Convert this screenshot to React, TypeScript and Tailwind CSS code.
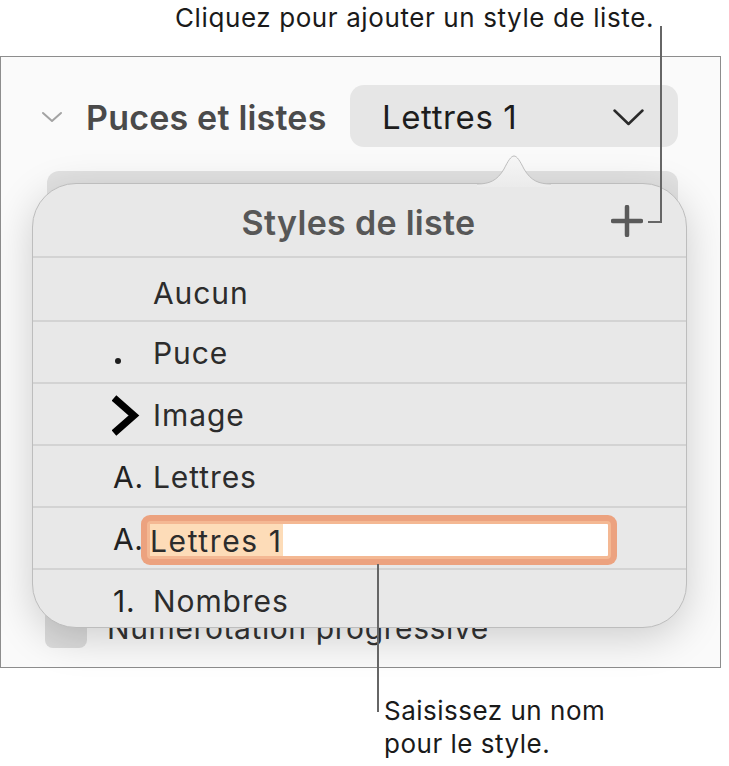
import React from "react";

const rows = [
  { marker: "", label: "Aucun" },
  { marker: "bullet", label: "Puce" },
  { marker: "chevron", label: "Image" },
  { marker: "A.", label: "Lettres" },
  { marker: "edit", label: "Lettres 1" },
  { marker: "1.", label: "Nombres" },
];

function Marker({ kind }: { kind: string }) {
  if (kind === "bullet") {
    return <div className="w-[6px] h-[6px] rounded-full bg-[#1e1e1e] ml-[2px] mt-[14px]" />;
  }
  if (kind === "chevron") {
    return (
      <svg width="30" height="42" viewBox="0 0 30 42" className="-ml-[1px]">
        <path d="M2 3 L22 20.5 L2 38" fill="none" stroke="#000" strokeWidth="7" strokeLinejoin="miter" />
      </svg>
    );
  }
  return <span className="text-[#222]">{kind}</span>;
}

export default function App() {
  return (
    <div className="relative w-[729px] h-[766px] bg-white font-['Inter',sans-serif] overflow-hidden">
      {/* top callout */}
      <div className="h-[56px] flex justify-end pr-[75px] pt-[3px]">
        <span className="text-[26px] leading-[30px] tracking-[0.6px] text-[#1a1a1a]">
          Cliquez pour ajouter un style de liste.
        </span>
      </div>

      {/* inspector panel */}
      <div className="w-[721px] h-[612px] border-[1.5px] border-[#8d8d8d] bg-[#fafafa] flex flex-col">
        <div className="flex items-center h-[62px] mt-[28px] pl-[40px] pr-[42px]">
          <svg width="22" height="12" viewBox="0 0 22 12" className="mt-[2px]">
            <path d="M2 2 L11 10 L20 2" fill="none" stroke="#a3a3a3" strokeWidth="2" strokeLinecap="round" strokeLinejoin="round" />
          </svg>
          <span className="ml-[23px] pt-[3px] text-[34px] tracking-[0.2px] font-semibold text-[#4a4a4a]">Puces et listes</span>
          <div className="ml-auto w-[328px] h-[62px] rounded-[14px] bg-[#e6e6e6] flex items-center pl-[32px] pr-[34px]">
            <span className="pt-[4px] text-[33px] tracking-[0.6px] text-[#1d1d1d]">Lettres 1</span>
            <svg width="31" height="17" viewBox="0 0 31 17" className="ml-auto mt-[2px]">
              <path d="M1.5 1.5 L15.5 15 L29.5 1.5" fill="none" stroke="#2a2a2a" strokeWidth="2.5" strokeLinecap="round" strokeLinejoin="round" />
            </svg>
          </div>
        </div>

        <div className="mt-[24px] ml-[46px] mr-[42px] h-[60px] rounded-[12px] bg-[#e2e2e2]" />

        <div className="mt-auto mb-[19px] ml-[44px] flex items-center h-[40px]">
          <div className="w-[42px] h-[40px] rounded-[8px] bg-[#dcdcdc]" />
          <span className="ml-[20px] text-[30px] tracking-[0.6px] text-[#333]">Numérotation progressive</span>
        </div>
      </div>

      {/* bottom callout */}
      <div className="pl-[384px] pt-[26px] text-[26px] leading-[33px] tracking-[0.5px] text-[#1a1a1a]">
        <div>Saisissez un nom</div>
        <div>pour le style.</div>
      </div>

      {/* popover */}
      <div className="absolute left-[32px] top-[183px] w-[655px] h-[445px] rounded-[44px] border border-[#bdbdbd] bg-[#e8e8e8] shadow-[0_10px_40px_rgba(0,0,0,0.18)]">
        <svg width="74" height="33" viewBox="0 0 74 33" className="absolute left-[444px] -top-[30px]">
          <defs>
            <linearGradient id="arrowFill" x1="0" y1="0" x2="0" y2="1">
              <stop offset="0" stopColor="#f6f6f6" />
              <stop offset="1" stopColor="#ebebeb" />
            </linearGradient>
          </defs>
          <path d="M0 30 C12 30 20 27 27 15 C31 7 34 2 37 2 C40 2 43 7 47 15 C54 27 62 30 74 30 L74 33 L0 33 Z" fill="url(#arrowFill)" />
          <path d="M0 30 C12 30 20 27 27 15 C31 7 34 2 37 2 C40 2 43 7 47 15 C54 27 62 30 74 30" fill="none" stroke="#bdbdbd" strokeWidth="1" />
        </svg>

        <div className="relative h-[74px] border-b-2 border-[#d3d3d3] flex items-center justify-center">
          <span className="pt-[4px] pr-[2px] text-[34px] tracking-[0.3px] font-semibold text-[#575757]">Styles de liste</span>
          <svg width="32" height="32" viewBox="0 0 32 32" className="absolute right-[43px] top-[21px]">
            <path d="M16 2 V30 M2 16 H30" stroke="#5a5a5a" strokeWidth="4.5" strokeLinecap="round" />
          </svg>
        </div>

        {rows.map((r, i) => (
          <div
            key={r.label}
            className={`flex items-center pl-[80px] text-[30px] tracking-[0.9px] text-[#2c2c2c] ${
              i === rows.length - 1 ? "h-[60px]" : "h-[62px] border-b-2 border-[#d3d3d3]"
            } ${i === 0 ? "h-[64px] pt-[8px]" : "pt-[3px]"}`}
          >
            {r.marker === "edit" ? (
              <>
                <div className="w-[28px] text-[#222] tracking-[0.5px]">A.</div>
                <div className="w-[476px] h-[50px] rounded-[9px] bg-[#eca27f] p-[6px] mt-[1px]">
                  <div className="h-full rounded-[4px] bg-white border-[3px] border-[#f4b893] flex items-center">
                    <span className="bg-[#fddcb8] h-full flex items-center pt-[3px] tracking-[1.6px]">{r.label}</span>
                  </div>
                </div>
              </>
            ) : (
              <>
                <div className="w-[40px] flex items-center">
                  <Marker kind={r.marker} />
                </div>
                <span>{r.label}</span>
              </>
            )}
          </div>
        ))}
      </div>

      {/* leader lines */}
      <svg width="729" height="766" className="absolute left-0 top-0 pointer-events-none">
        <path d="M661 26 V222 H648" fill="none" stroke="#666" strokeWidth="2" />
        <path d="M378 564 V712" fill="none" stroke="#666" strokeWidth="2" />
      </svg>
    </div>
  );
}
